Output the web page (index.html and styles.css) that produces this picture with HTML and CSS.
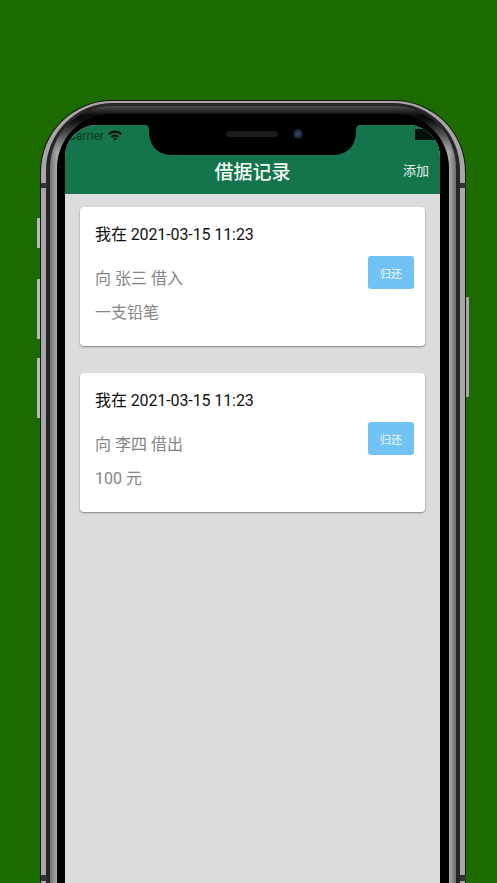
FILE: index.html
```html
<!DOCTYPE html>
<html lang="zh">
<head>
<meta charset="utf-8">
<title>借据记录</title>
<link rel="stylesheet" href="styles.css">
</head>
<body>
<div class="phone">
  <span class="side side-l1"></span>
  <span class="side side-l2"></span>
  <span class="side side-l3"></span>
  <span class="side side-r"></span>
  <div class="rim-outer">
    <div class="rim-silver">
      <div class="rim-dark">
        <div class="rim-gray">
          <div class="rim-black">
            <div class="screen">
              <header class="app-header">
                <div class="status">
                  <span class="carrier">Carrier</span>
                  <svg class="wifi" viewBox="0 0 14 11" aria-hidden="true"><path d="M0 3.6C3.9-.6 10.100-.6 14 3.600L12.500 5.100C9.400 1.900 4.600 1.900 1.500 5.100Z"/><path d="M3 6.300C5.200 4 8.800 4 11 6.300L9.500 7.800C8.100 6.400 5.900 6.400 4.500 7.800Z"/><path d="M5.300 8.700C6.300 7.700 7.700 7.700 8.700 8.700L7 10.700Z"/></svg>
                  <span class="battery"></span>
                </div>
                <div class="title-row">
                  <h1 class="title">借据记录</h1>
                  <span class="add">添加</span>
                </div>
              </header>
              <main class="list">
                <article class="card">
                  <div class="card-text">
                    <p class="when">我在 2021-03-15 11:23</p>
                    <p class="line who">向 张三 借入</p>
                    <p class="line">一支铅笔</p>
                  </div>
                  <button class="return">归还</button>
                </article>
                <article class="card">
                  <div class="card-text">
                    <p class="when">我在 2021-03-15 11:23</p>
                    <p class="line who">向 李四 借出</p>
                    <p class="line">100 元</p>
                  </div>
                  <button class="return">归还</button>
                </article>
              </main>
              <div class="notch">
                <svg class="notch-shape" viewBox="0 0 215 31" aria-hidden="true"><path d="M0 0H215C212 0 211 2 211 6C211 21 202 30 188 30H27C13 30 4 21 4 6C4 2 3 0 0 0Z"/></svg>
                <span class="speaker"></span>
                <span class="camera"></span>
              </div>
            </div>
          </div>
        </div>
      </div>
    </div>
  </div>
  <span class="band band-lt"></span>
  <span class="band band-rt"></span>
  <span class="band band-lb"></span>
  <span class="band band-rb"></span>
</div>
</body>
</html>
```
FILE: styles.css
```css
* { box-sizing: border-box; }
html, body { margin: 0; height: 100%; overflow: hidden; }
body {
  background: #1c6b00;
  font-family: Roboto, "Noto Sans CJK SC", sans-serif;
  padding: 100px 31px 0 40px;
}
p, h1 { margin: 0; font-weight: 400; }

.phone { position: relative; width: 426px; height: 783px; }
.side { position: absolute; background: #b9bab5; border-radius: 1px; }
.side-l1 { left: -3px; top: 118px; width: 4px; height: 30px; }
.side-l2 { left: -3px; top: 179px; width: 4px; height: 60px; }
.side-l3 { left: -3px; top: 258px; width: 4px; height: 60px; }
.side-r { right: -3px; top: 197px; width: 4px; height: 100px; background: #a9a4aa; }

.band { position: absolute; width: 6px; background: #33333a; }
.band-lt { left: 1px; top: 83px; height: 5px; }
.band-rt { right: 0; top: 83px; height: 5px; }
.band-lb { left: 1px; top: 775px; height: 6px; }
.band-rb { right: 0; top: 775px; height: 6px; }

.rim-outer { position: relative; height: 100%; padding: 1px 1px 0; background: #15150f; border-radius: 72px 72px 0 0; }
.rim-silver { height: 100%; padding: 2px 5px 0; background: #a8a6a8; border-radius: 71px 71px 0 0; }
.rim-dark { height: 100%; padding: 3px 4px 0; background: #26262a; border-radius: 67px 67px 0 0; }
.rim-gray {
  height: 100%; padding: 8px 7px 0;
  background:
    linear-gradient(#4c4c4c, #0c0c0c 9px, #0c0c0c 14px, transparent 46px),
    linear-gradient(90deg, #6f6f6f, #ababab 7px, #ababab calc(100% - 7px), #6f6f6f);
  border-radius: 62px 62px 0 0;
}
.rim-black { height: 100%; padding: 11px 9px 0 8px; background: #000; border-radius: 54px 54px 0 0; }

.screen { position: relative; height: 100%; overflow: hidden; background: #dcdcdc; border-radius: 32px 32px 0 0; }

.app-header { height: 69px; background: #14754c; color: #fff; }
.status { position: relative; display: flex; align-items: center; height: 22px; padding: 0 0 0 3px; color: #0a3a22; font-size: 12px; }
.carrier { line-height: 22px; }
.wifi { width: 14px; height: 11px; margin-left: 4px; margin-top: -2px; fill: #06120a; }
.battery { position: absolute; right: 3px; top: 4px; width: 22px; height: 11px; background: #04100a; }
.title-row { position: relative; display: flex; justify-content: center; align-items: center; height: 47px; }
.title { font-size: 19px; font-weight: 500; color: #f2faf5; }
.add { position: absolute; right: 11px; top: 13px; font-size: 13px; color: #e6f3ec; }

.list { display: flex; flex-direction: column; gap: 27px; padding: 13px 15px 0; }
.card {
  position: relative;
  display: flex; align-items: flex-start; justify-content: space-between;
  height: 139px; padding: 16px 11px 0 15px;
  background: #fff; border-radius: 4px;
  box-shadow: 0 1px 2px rgba(0,0,0,.4);
}
.when { font-size: 16px; line-height: 23px; color: #111; letter-spacing: -.1px; }
.line { font-size: 16px; line-height: 23px; margin-top: 11px; color: #858585; }
.who { margin-top: 21px; }
.return {
  width: 46px; height: 33px; margin-top: 33px; padding: 0;
  border: 0; border-radius: 3px;
  background: #70c3f4; color: #f4fbff;
  font: 11px Roboto, "Noto Sans CJK SC", sans-serif;
}

.notch { position: absolute; left: 80px; top: 0; width: 215px; height: 31px; }
.notch-shape { position: absolute; inset: 0; width: 100%; height: 100%; fill: #000; }
.speaker { position: absolute; left: 81px; top: 6px; width: 52px; height: 6px; border-radius: 3px; background: #1b1b1d; }
.camera { position: absolute; left: 148px; top: 4px; width: 10px; height: 10px; border-radius: 50%; background: radial-gradient(circle, #2f4468 15%, #101a2c 70%); }
```
